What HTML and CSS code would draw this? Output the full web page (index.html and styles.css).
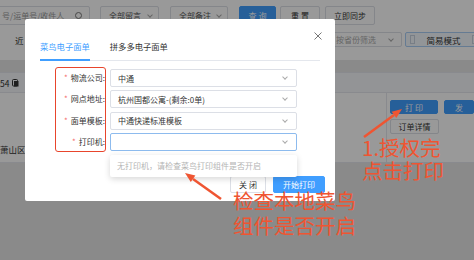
FILE: index.html
```html
<!DOCTYPE html>
<html lang="zh-CN">
<head>
    <meta charset="UTF-8">
    <title>打印电子面单</title>
    <link rel="stylesheet" href="styles.css">
</head>
<body>
    <div class="page">
        <div class="filters">
            <div class="filter-row">
                <div class="search-box">号/运单号/收件人<span class="info"></span></div>
                <div class="select sel-msg">全部留言<i class="chev"></i></div>
                <div class="select sel-note">全部备注<i class="chev"></i></div>
                <div class="btn btn-primary btn-query">查 询</div>
                <div class="btn btn-reset">重 置</div>
                <div class="btn btn-sync">立即同步</div>
            </div>
            <div class="filter-row row-two">
                <div class="recent">近</div>
                <div class="select sel-prov">按省份筛选<i class="chev"></i></div>
                <div class="mode-btn"><span class="box"></span>简易模式<span class="box"></span></div>
            </div>
        </div>

        <div class="order-head">
            <span class="order-no">54</span>
            <svg class="copy-icon" width="7" height="8" viewBox="0 0 7 8"><rect x="0.5" y="0.5" width="5" height="6.5" rx="1" fill="none" stroke="#333"/><rect x="2" y="2" width="4.5" height="5.5" fill="#333"/></svg>
        </div>
        <div class="order-body">
            <div class="col-addr">萧山区</div>
            <div class="col-price">
                <span class="price">00</span>
                <span>0)</span>
            </div>
            <div class="col-actions">
                <div class="action-line">
                    <div class="btn btn-primary btn-print">打 印</div>
                    <div class="btn btn-primary btn-more">发</div>
                </div>
                <div class="btn btn-detail">订单详情</div>
            </div>
        </div>
    </div>

    <div class="mask"></div>

    <div class="modal">
        <svg class="modal-close" width="8" height="8" viewBox="0 0 8 8"><path d="M0.5 0.5L7.5 7.5M7.5 0.5L0.5 7.5" stroke="#777" stroke-width="1"/></svg>
        <div class="tabs">
            <div class="tab active">菜鸟电子面单</div>
            <div class="tab">拼多多电子面单</div>
        </div>
        <div class="form">
            <div class="form-row">
                <div class="label"><span class="req">*</span>物流公司:</div>
                <div class="field">中通<i class="chev"></i></div>
            </div>
            <div class="form-row">
                <div class="label"><span class="req">*</span>网点地址:</div>
                <div class="field">杭州国都公寓-(剩余:0单)<i class="chev"></i></div>
            </div>
            <div class="form-row">
                <div class="label"><span class="req">*</span>面单模板:</div>
                <div class="field">中通快递标准模板<i class="chev"></i></div>
            </div>
            <div class="form-row">
                <div class="label"><span class="req">*</span>打印机:</div>
                <div class="field focus"><i class="chev"></i></div>
            </div>
        </div>
        <div class="footer">
            <div class="btn btn-close">关 闭</div>
            <div class="btn btn-primary btn-start">开始打印</div>
        </div>
        <div class="dropdown">无打印机，请检查菜鸟打印组件是否开启</div>
    </div>

    <!-- 标注 -->
    <div class="mark-box"></div>
    <svg class="arrows" width="474" height="260" viewBox="0 0 474 260">
        <line x1="364" y1="137" x2="394" y2="115" stroke="#ef5532" stroke-width="2.5"/>
        <polygon points="402,109 396.3,118.1 391.6,111.7" fill="#ef5532"/>
        <line x1="221" y1="199" x2="193" y2="179" stroke="#ef5532" stroke-width="2.5"/>
        <polygon points="185,173 195.4,175.6 190.8,182.1" fill="#ef5532"/>
    </svg>
    <div class="note note-auth">1.授权完<br>点击打印</div>
    <div class="note note-check">检查本地菜鸟<br>组件是否开启</div>
</body>
</html>
```

FILE: styles.css
```css
* {
    box-sizing: border-box;
}
body {
    margin: 0;
    width: 474px;
    height: 260px;
    overflow: hidden;
    position: relative;
    background-color: #e6e6e6;
    color: #333;
    font-family: "Noto Sans CJK SC", "Noto Sans", sans-serif;
    font-size: 8px;
}
.page {
    height: 260px;
}
.filters {
    background-color: #fff;
    height: 60px;
    padding-top: 6px;
}
.filter-row {
    display: flex;
    height: 19px;
}
.row-two {
    margin-top: 7px;
    height: 15px;
    align-items: center;
}
.search-box {
    margin-left: -10px;
    width: 100px;
    border: 1px solid #dcdfe6;
    border-radius: 2px;
    display: flex;
    align-items: center;
    padding-left: 11px;
    color: #999;
}
.info {
    margin-left: auto;
    margin-right: 7px;
    width: 7px;
    height: 7px;
    border: 1px solid #777;
    border-radius: 50%;
}
.select {
    display: flex;
    align-items: center;
    justify-content: space-between;
    border: 1px solid #dcdfe6;
    border-radius: 2px;
    padding: 0 6px 0 8px;
    color: #555;
}
.sel-msg {
    margin-left: 10px;
    width: 59px;
}
.sel-note {
    margin-left: 11px;
    width: 58px;
}
.chev {
    width: 4px;
    height: 4px;
    border-right: 1px solid #aaa;
    border-bottom: 1px solid #aaa;
    transform: rotate(45deg);
    margin-top: -2px;
}
.btn {
    display: flex;
    align-items: center;
    justify-content: center;
    border: 1px solid #dcdfe6;
    border-radius: 2px;
    background-color: #fff;
    color: #333;
}
.btn-primary {
    background-color: #409eff;
    border-color: #409eff;
    color: #fff;
}
.btn-query {
    margin-left: 11px;
    width: 37px;
}
.btn-reset {
    margin-left: 4px;
    width: 40px;
}
.btn-sync {
    margin-left: 5px;
    width: 50px;
}
.recent {
    margin-left: 15px;
    font-size: 8.5px;
}
.sel-prov {
    margin-left: auto;
    width: 102px;
    height: 15px;
    color: #aaa;
    padding-left: 35px;
    padding-right: 8px;
}
.mode-btn {
    margin-left: 3px;
    margin-right: -8px;
    width: 77px;
    height: 15px;
    display: flex;
    align-items: center;
    justify-content: space-between;
    padding: 0 4px;
    border: 1px solid #a8cdf5;
    border-radius: 2px;
    background-color: #f4f8fd;
    font-size: 8.5px;
}
.box {
    width: 5px;
    height: 9px;
    border: 1px solid #c8d3df;
}
.order-head {
    margin-top: 12px;
    height: 21px;
    background-color: #f5f7fa;
    border-top: 1px solid #e4e7ed;
    border-bottom: 1px solid #e4e7ed;
    display: flex;
    align-items: center;
    gap: 3px;
    font-size: 8.5px;
}
.copy-icon {
    margin-top: 1px;
}
.order-body {
    height: 70px;
    background-color: #fff;
    border-bottom: 1px solid #e4e7ed;
    display: flex;
}
.col-addr {
    width: 332px;
    display: flex;
    align-items: flex-end;
    padding-bottom: 7px;
    font-size: 8.5px;
}
.col-price {
    width: 66px;
    display: flex;
    flex-direction: column;
    padding-top: 17px;
    gap: 3px;
    line-height: 12px;
    font-size: 8.5px;
    border-right: 1px solid #e4e7ed;
}
.price {
    color: #f56c6c;
}
.col-actions {
    padding-top: 7px;
    padding-left: 3px;
}
.action-line {
    display: flex;
    gap: 6px;
}
.btn-print {
    width: 48px;
    height: 14px;
}
.btn-more {
    width: 30px;
    height: 14px;
}
.btn-detail {
    margin-top: 5px;
    width: 49px;
    height: 15px;
}
.mask {
    position: absolute;
    left: 0;
    top: 0;
    width: 474px;
    height: 260px;
    background-color: rgba(0, 0, 0, 0.4);
}
.modal {
    position: absolute;
    left: 25px;
    top: 19px;
    width: 310px;
    height: 182px;
    background-color: #fff;
    border-radius: 2px;
    display: flex;
    flex-direction: column;
    padding-bottom: 8px;
}
.modal-close {
    position: absolute;
    left: 289px;
    top: 13px;
}
.tabs {
    margin: 0 15px;
    height: 42px;
    border-bottom: 1px solid #e4e7ed;
    display: flex;
    align-items: flex-end;
    gap: 20px;
}
.tab {
    line-height: 12px;
    padding-bottom: 7px;
    margin-bottom: -1px;
    border-bottom: 2px solid transparent;
    font-size: 8.3px;
}
.tab.active {
    color: #409eff;
    border-bottom-color: #409eff;
}
.form {
    margin-top: 8px;
}
.form-row {
    display: flex;
    height: 18px;
    margin-bottom: 3.3px;
}
.label {
    width: 85px;
    text-align: right;
    padding-right: 5px;
    line-height: 18px;
}
.req {
    color: #f56c6c;
    margin-right: 3px;
}
.field {
    width: 187px;
    border: 1px solid #dcdfe6;
    border-radius: 2px;
    display: flex;
    align-items: center;
    justify-content: space-between;
    padding: 0 9px 0 7px;
}
.field.focus {
    justify-content: flex-end;
    border-color: #8dbbee;
}
.dropdown {
    position: absolute;
    left: 85px;
    top: 136px;
    width: 187px;
    height: 22px;
    line-height: 22px;
    padding-left: 7px;
    background-color: #fff;
    border-radius: 2px;
    box-shadow: 0 2px 6px rgba(0, 0, 0, 0.16);
    color: #b4b4b4;
}
.footer {
    margin-top: auto;
    display: flex;
    justify-content: flex-end;
    gap: 7px;
    padding-right: 10px;
}
.btn-close {
    width: 36px;
    height: 17px;
}
.btn-start {
    width: 52px;
    height: 17px;
}
.mark-box {
    position: absolute;
    left: 55px;
    top: 67px;
    width: 51px;
    height: 85px;
    border: 1.5px solid #e8452c;
    border-radius: 3px;
}
.arrows {
    position: absolute;
    left: 0;
    top: 0;
}
.note {
    position: absolute;
    color: #ef5532;
    font-size: 20.5px;
    white-space: nowrap;
}
.note-auth {
    left: 362px;
    top: 136px;
    line-height: 23px;
}
.note-check {
    left: 233px;
    top: 188px;
    line-height: 25px;
}
```
